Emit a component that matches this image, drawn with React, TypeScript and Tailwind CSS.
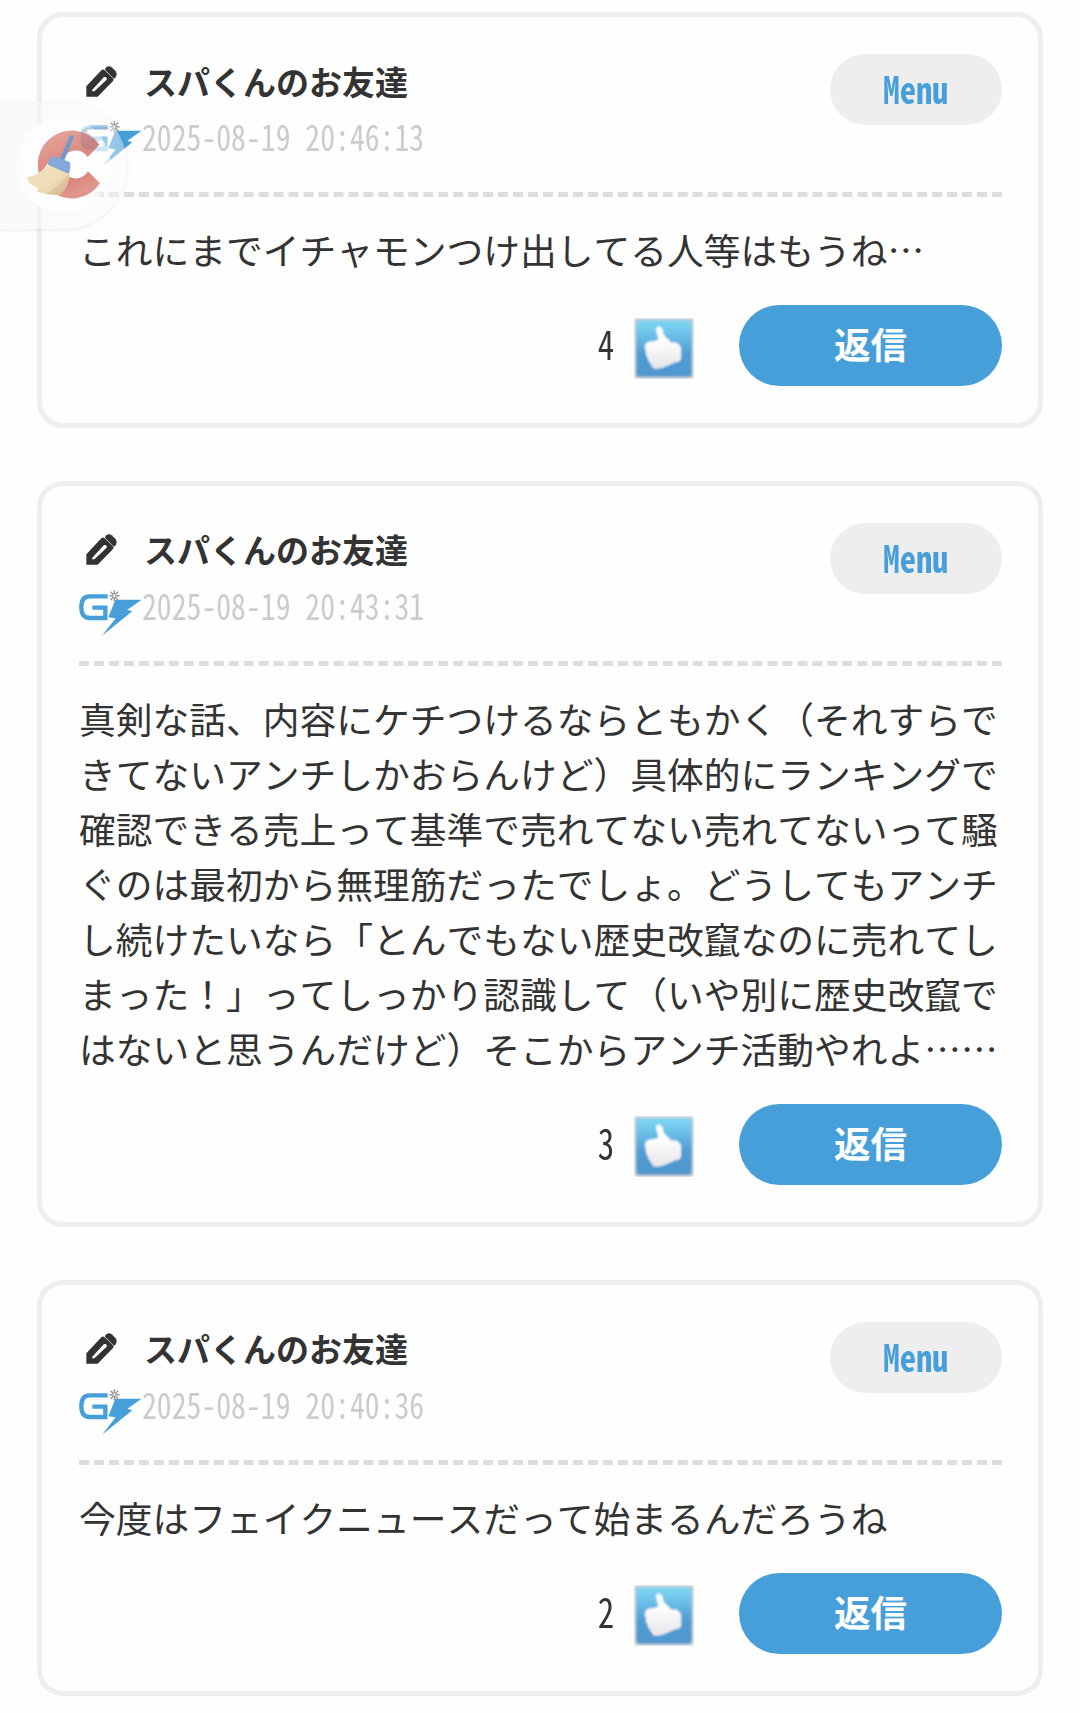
import React from "react";

type Post = { id: number; date: string; body: string; likes: number };

const posts: Post[] = [
  { id: 1, date: "2025-08-19 20:46:13", body: "これにまでイチャモンつけ出してる人等はもうね…", likes: 4 },
  {
    id: 2,
    date: "2025-08-19 20:43:31",
    body:
      "真剣な話、内容にケチつけるならともかく（それすらで\nきてないアンチしかおらんけど）具体的にランキングで\n確認できる売上って基準で売れてない売れてないって騒\nぐのは最初から無理筋だったでしょ。どうしてもアンチ\nし続けたいなら「とんでもない歴史改竄なのに売れてし\nまった！」ってしっかり認識して（いや別に歴史改竄で\nはないと思うんだけど）そこからアンチ活動やれよ……",
    likes: 3,
  },
  { id: 3, date: "2025-08-19 20:40:36", body: "今度はフェイクニュースだって始まるんだろうね", likes: 2 },
];

function PencilIcon() {
  return (
    <svg className="mb-[2px] ml-[7px] h-[31px] w-[31px] shrink-0" viewBox="79 69 93 93">
      <path fillRule="evenodd" fill="#333" d="M80 161V130L125 82Q130 77 135 82L160 106Q164 110 160 114L114 161ZM98 140Q95 148 105 144L141 110Q143 100 133 102Z" />
      <path fill="#333" d="M137 76Q145 66 156 73L168 85Q174 94 167 104L163 107L136 80Z" />
    </svg>
  );
}

function BoltLogo() {
  return (
    <svg className="h-[47px] w-[63px] shrink-0" viewBox="57 240 189 141">
      <path d="M143 259H89C69 259 64 273 64 291C64 311 70 324 89 324H136V293H97" fill="none" stroke="#479fda" strokeWidth="13" />
      <path d="M166 269H245L202 299L217 304L126 377L167 325L145 322Z" fill="#479fda" stroke="#fff" strokeWidth="4" paintOrder="stroke" />
      <path d="M163 241V274M148 257H179M152 245L174 270M174 245L152 270" stroke="#999" strokeWidth="4.5" />
      <circle cx="163" cy="257" r="4" fill="#eee" />
    </svg>
  );
}

function ThumbIcon() {
  return (
    <svg className="h-[61px] w-[60px] shrink-0" viewBox="0 0 180 183">
      <defs>
        <linearGradient id="sky" x1="0" y1="0" x2="0" y2="1">
          <stop offset="0" stopColor="#7fd6f3" />
          <stop offset="0.12" stopColor="#76cdef" />
          <stop offset="0.6" stopColor="#4f9cd4" />
          <stop offset="1" stopColor="#5097cf" />
        </linearGradient>
        <linearGradient id="hand" x1="0" y1="0" x2="0" y2="1">
          <stop offset="0.3" stopColor="#fff" />
          <stop offset="1" stopColor="#e6e6e8" />
        </linearGradient>
        <filter id="soft" x="-10%" y="-10%" width="120%" height="120%">
          <feGaussianBlur stdDeviation="2.4" />
        </filter>
      </defs>
      <g filter="url(#soft)">
        <rect x="1" y="1" width="178" height="181" rx="8" fill="#c5cbcf" />
        <rect x="7" y="7" width="166" height="169" rx="11" fill="url(#sky)" />
        <path
          d="M67 29Q73 22 80 28Q88 34 88 48Q94 58 105 66L113 75Q124 70 133 78Q143 86 141 99L141 122Q138 132 126 132Q112 138 97 145Q80 154 62 152Q53 149 51 139Q42 130 40 118Q33 108 36 100Q30 87 35 77Q42 69 57 70L72 66Q73 59 70 50Q65 39 67 29Z"
          fill="url(#hand)"
        />
      </g>
    </svg>
  );
}

function FloatingCleaner() {
  return (
    <div className="absolute left-0 top-[102px] h-[127px] w-[127px] rounded-r-full bg-gradient-to-r from-[#f7f7f7]/70 to-[#fafafa]/40 shadow-[0_1px_5px_rgba(0,0,0,0.08)]">
      <svg className="absolute left-0 -top-3 h-[150px] w-[160px]" viewBox="0 0 480 450">
        <defs>
          <linearGradient id="red" x1="0" y1="0" x2="0.4" y2="1">
            <stop offset="0" stopColor="#e2a091" />
            <stop offset="0.5" stopColor="#d98076" />
            <stop offset="0.75" stopColor="#cf7469" />
            <stop offset="1" stopColor="#df8a80" />
          </linearGradient>
          <linearGradient id="straw" x1="0" y1="0" x2="1" y2="1">
            <stop offset="0" stopColor="#f1e2c0" />
            <stop offset="0.6" stopColor="#f0ddb8" />
            <stop offset="1" stopColor="#d9bd93" />
          </linearGradient>
        </defs>
        <circle cx="190" cy="226" r="142" fill="#fff" fillOpacity="0.5" />
        <path d="M108 109A142 142 0 0 1 130 97V355A142 142 0 0 1 108 343Z" fill="#fff" fillOpacity="0.5" />
        <path d="M298 164A102 102 0 1 0 300 280L264 244A42 42 0 1 1 263 201Z" fill="url(#red)" fillOpacity="0.9" />
        <path
          d="M298 164Q290 145 262 128V118H325V112H272C250 112 242 124 242 146C242 172 252 178 272 178H280Z"
          fill="#6d6a93"
          fillOpacity="0.22"
        />
        <path d="M143 219L208 248Q212 280 182 315Q145 315 112 306L114 294Q86 285 80 262Q122 256 143 219Z" fill="url(#straw)" />
        <path d="M203 252Q190 282 135 313Q160 317 182 315Q207 285 208 250Z" fill="#c9a77e" fillOpacity="0.3" />
        <path d="M209 139Q216 132 222 140L193 211L180 206Z" fill="#7398cf" />
        <path d="M153 202Q155 198 165 201L204 214Q212 217 211 225L209 246Q207 251 200 249L147 226Q141 222 145 216Z" fill="#83a8dc" />
      </svg>
    </div>
  );
}

function PostCard({ post }: { post: Post }) {
  return (
    <article className="rounded-[26px] border-[5px] border-[#eee] bg-[#fefefe] p-[37px] pr-9">
      <header className="flex h-[143px] items-start justify-between border-b-[5px] border-dashed border-[#ddd]">
        <div className="flex flex-col">
          <div className="mb-[11px] flex h-14 items-center">
            <PencilIcon />
            <h2 className="mb-[2px] ml-[27px] text-[33px] font-bold leading-none [font-kerning:none]">スパくんのお友達</h2>
          </div>
          <div className="flex h-[47px] items-start">
            <BoltLogo />
            <time className="-mt-[3px] h-[34px] w-[283px] origin-left scale-x-[.825] whitespace-pre text-[36px] leading-[34px] text-[#ccc] [font-feature-settings:'hwid']">
              {post.date}
            </time>
          </div>
        </div>
        <button className="flex h-[71px] w-[172px] items-center justify-center rounded-full bg-[#eee] pb-[3px] font-bold text-[#479fda]">
          <span className="scale-x-[.86] text-[38px] leading-none [font-feature-settings:'hwid']">Menu</span>
        </button>
      </header>
      <p className="mb-7 mt-[25px] whitespace-pre text-[36.76px] leading-[55px] [font-kerning:none]">{post.body}</p>
      <footer className="flex h-[81px] items-center justify-end">
        <span className="mb-[5px] mr-[18px] scale-x-[.82] text-[40px] leading-none [font-feature-settings:'hwid']">{post.likes}</span>
        <div className="mr-[45px] pt-[5px]">
          <ThumbIcon />
        </div>
        <button className="h-[81px] w-[263px] rounded-full bg-[#479fda] pb-1 text-[36.5px] font-bold leading-[77px] text-white">返信</button>
      </footer>
    </article>
  );
}

export default function App() {
  return (
    <main
      lang="ja"
      className="relative flex h-[1713px] w-[1080px] flex-col gap-[52.85px] overflow-hidden bg-[#fefefe] px-[37px] pt-3 font-['Noto_Sans_CJK_JP',sans-serif] text-[#333]"
    >
      {posts.map((post) => (
        <PostCard key={post.id} post={post} />
      ))}
      <FloatingCleaner />
    </main>
  );
}
